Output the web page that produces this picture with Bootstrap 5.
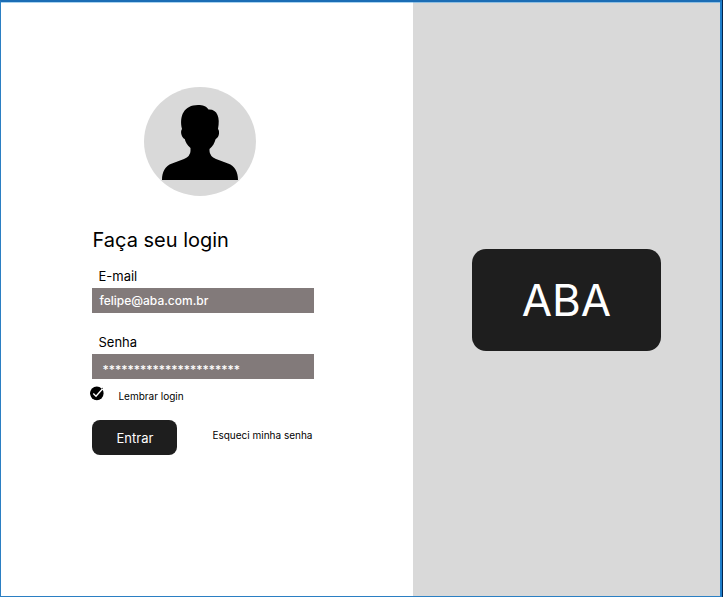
<!DOCTYPE html>
<html lang="pt-BR">
<head>
<meta charset="utf-8">
<meta name="viewport" content="width=device-width, initial-scale=1">
<title>ABA - Login</title>
<link href="https://cdn.jsdelivr.net/npm/bootstrap@5.3.0/dist/css/bootstrap.min.css" rel="stylesheet">
<style>
body { font-family: Inter, "Liberation Sans", sans-serif; color: #000; background: #03234b; padding-right: 1px; }
.frame { border: 1px solid #2b7fc3; border-top: 2px solid #1b6db5; border-right: 2px solid #1f7fcb; }
.login-side { width: 57.3%; box-shadow: inset 0 1px #a9d3f0; padding: 85px 16px 32px calc(13% - 2px); }
.brand-side { background: #d9d9d9; box-shadow: inset 0 1px #8fbfe2; padding-top: 2px; }
.login-form { width: 100%; max-width: 222px; }
.avatar { width: 112px; height: 109px; margin-left: 52px; margin-bottom: 30px; }
.title { font-size: 20px; line-height: 28px; font-weight: 400; margin-bottom: 12px; }
.field-label { font-size: 13px; line-height: 20px; padding-left: 6px; margin-bottom: 2px; }
.field { background: #827a7a; color: #fff; font-size: 12px; line-height: 15px; font-weight: 500; padding: 5px 7px; height: 25px; }
.field:focus { background: #827a7a; color: #fff; }
.field-secret { padding: 8px 10px 2px; }
.field-gap { margin-bottom: 19px; }
.remember { margin-top: 6px; margin-left: -2px; gap: 14px; height: 18px; }
.remember-box { appearance: none; width: 14px; height: 16px; margin: 0; align-self: flex-start; border-radius: 7px;
  background: center / 14px 16px no-repeat url("data:image/svg+xml,%3Csvg xmlns='http://www.w3.org/2000/svg' viewBox='0 0 14 16'%3E%3Ccircle cx='7' cy='8' r='7'/%3E%3C/svg%3E"); }
.remember-box:checked {
  background-image: url("data:image/svg+xml,%3Csvg xmlns='http://www.w3.org/2000/svg' viewBox='0 0 14 16'%3E%3Ccircle cx='6.8' cy='8.4' r='6.8'/%3E%3Cpath d='M3.3 8.6 6 11.2 13.5 2.8' fill='none' stroke='%23fff' stroke-width='1.4'/%3E%3Cpath d='M12 3.6 14 1.8' stroke='%23000'/%3E%3C/svg%3E"); }
.small-text { font-size: 10px; line-height: 14px; }
.actions { margin-top: 17px; }
.link-forgot { padding-right: 2px; padding-bottom: 6px; }
.btn-enter { --bs-btn-color: #fff; --bs-btn-bg: #1e1e1e; --bs-btn-hover-color: #fff; --bs-btn-hover-bg: #333; --bs-btn-border-width: 0; --bs-btn-border-radius: 8px;
  width: 85px; height: 35px; padding: 0; font-size: 13px; line-height: 20px; }
.brand { width: 189px; height: 102px; border-radius: 14px; background: #1e1e1e; font-size: 44px; line-height: 54px; font-weight: 400; }
</style>
<script src="https://cdn.jsdelivr.net/npm/bootstrap@5.3.0/dist/js/bootstrap.bundle.min.js"></script>
</head>
<body>
<div class="frame d-flex min-vh-100">
  <main class="login-side bg-white d-flex flex-column flex-shrink-0">
    <form class="login-form">
      <svg class="avatar d-block" viewBox="0 0 112 109" aria-hidden="true">
        <ellipse cx="56" cy="54.5" rx="56" ry="54.5" fill="#d9d9d9"/>
        <path d="M18 93C18 85 21 79 28 76.500L40 72Q46.500 69 46.500 64V61C43 58 41.500 55 40.700 52C38 51 36.500 46 37.300 43.500C37.500 42.500 38 42.500 38 42C35 29 40 18 54 18C59 18 62 19 64.500 22.500C73 22 76.500 30 74 42C75.500 43 76 50 71.700 52C70.500 56 69 59 65.500 62V64Q65.500 69 72 72L84 76.500C91 79 94 85 94 93Z"/>
      </svg>
      <h1 class="title">Faça seu login</h1>
      <label class="field-label d-block" for="email">E-mail</label>
      <input class="field field-gap form-control border-0 rounded-0 shadow-none" id="email" type="text" inputmode="email" value="felipe@aba.com.br">
      <label class="field-label d-block" for="senha">Senha</label>
      <input class="field field-secret form-control border-0 rounded-0 shadow-none" id="senha" type="text" autocomplete="off" value="**********************">
      <div class="remember d-flex align-items-end">
        <input class="remember-box" id="lembrar" type="checkbox" checked>
        <label class="small-text" for="lembrar">Lembrar login</label>
      </div>
      <div class="actions d-flex justify-content-between align-items-center">
        <button class="btn btn-enter" type="submit">Entrar</button>
        <a class="link-forgot small-text text-black text-decoration-none" href="#">Esqueci minha senha</a>
      </div>
    </form>
  </main>
  <aside class="brand-side flex-grow-1 d-flex align-items-center justify-content-center">
    <div class="brand text-white d-flex align-items-center justify-content-center">ABA</div>
  </aside>
</div>
</body>
</html>
